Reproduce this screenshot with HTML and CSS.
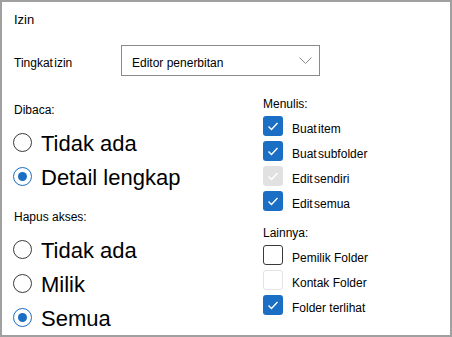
FILE: index.html
```html
<!DOCTYPE html>
<html lang="id">
<head>
<meta charset="utf-8">
<title>Izin</title>
<link rel="stylesheet" href="styles.css">
</head>
<body>
<div class="panel">
  <div class="title">Izin</div>
  <div class="level-row">
    <div class="level-label tight">Tingkat izin</div>
    <div class="select">
      <span class="select-text">Editor penerbitan</span>
      <svg class="chevron" width="13" height="7" viewBox="0 0 13 7"><path d="M0.5 0.5 L6.5 6.5 L12.5 0.5" fill="none" stroke="#8a8a8a" stroke-width="1"/></svg>
    </div>
  </div>
  <div class="columns">
    <div class="col-left">
      <div class="group-label">Dibaca:</div>
      <div class="radios">
        <div class="radio-row"><span class="radio"></span><span class="radio-text">Tidak ada</span></div>
        <div class="radio-row"><span class="radio on"></span><span class="radio-text">Detail lengkap</span></div>
      </div>
      <div class="group-label second">Hapus akses:</div>
      <div class="radios">
        <div class="radio-row"><span class="radio"></span><span class="radio-text">Tidak ada</span></div>
        <div class="radio-row"><span class="radio"></span><span class="radio-text">Milik</span></div>
        <div class="radio-row"><span class="radio on"></span><span class="radio-text">Semua</span></div>
      </div>
    </div>
    <div class="col-right">
      <div class="group-label">Menulis:</div>
      <div class="checks">
        <div class="check-row"><span class="box checked"><svg viewBox="0 0 20 20"><path d="M5.5 10.5 L8.5 13.5 L14.5 7" fill="none" stroke="#fff" stroke-width="1.4"/></svg></span><span class="check-text tight">Buat item</span></div>
        <div class="check-row"><span class="box checked"><svg viewBox="0 0 20 20"><path d="M5.5 10.5 L8.5 13.5 L14.5 7" fill="none" stroke="#fff" stroke-width="1.4"/></svg></span><span class="check-text tight">Buat subfolder</span></div>
        <div class="check-row"><span class="box checked-disabled"><svg viewBox="0 0 20 20"><path d="M5.5 10.5 L8.5 13.5 L14.5 7" fill="none" stroke="#fff" stroke-width="1.4"/></svg></span><span class="check-text tight">Edit sendiri</span></div>
        <div class="check-row"><span class="box checked"><svg viewBox="0 0 20 20"><path d="M5.5 10.5 L8.5 13.5 L14.5 7" fill="none" stroke="#fff" stroke-width="1.4"/></svg></span><span class="check-text tight">Edit semua</span></div>
      </div>
      <div class="group-label second-right">Lainnya:</div>
      <div class="checks">
        <div class="check-row"><span class="box empty"></span><span class="check-text">Pemilik Folder</span></div>
        <div class="check-row"><span class="box empty-disabled"></span><span class="check-text">Kontak Folder</span></div>
        <div class="check-row"><span class="box checked"><svg viewBox="0 0 20 20"><path d="M5.5 10.5 L8.5 13.5 L14.5 7" fill="none" stroke="#fff" stroke-width="1.4"/></svg></span><span class="check-text">Folder terlihat</span></div>
      </div>
    </div>
  </div>
</div>
</body>
</html>
```

FILE: styles.css
```css
html, body {
  margin: 0;
  padding: 0;
  background: #ffffff;
}

body {
  font-family: "Liberation Sans", Arial, sans-serif;
  color: #000;
}

.panel {
  width: 452px;
  height: 337px;
  box-sizing: border-box;
  border: 2px solid #a0a0a0;
  padding: 10px 12px 0 12px;
  overflow: hidden;
}

.title {
  font-size: 13px;
  line-height: 16px;
}

.tight {
  word-spacing: -2px;
}

.level-row {
  display: flex;
  margin-top: 17px;
  height: 31px;
}

.level-label {
  width: 107px;
  font-size: 12px;
  line-height: 25px;
  padding-top: 6px;
}

.select {
  width: 199px;
  height: 31px;
  box-sizing: border-box;
  border: 1px solid #8a8a8a;
  display: flex;
  align-items: flex-start;
  padding-left: 10px;
}

.select-text {
  font-size: 12px;
  line-height: 25px;
  padding-top: 5px;
}

.chevron {
  margin-left: auto;
  margin-right: 7px;
  margin-top: 11px;
}

.columns {
  display: grid;
  grid-template-columns: 249px 1fr;
}

.col-left {
  padding-top: 26px;
  display: flex;
  flex-direction: column;
}

.col-right {
  padding-top: 20px;
  display: flex;
  flex-direction: column;
}

.group-label {
  font-size: 12px;
  line-height: 16px;
}

.group-label.second {
  margin-top: 16px;
}

.group-label.second-right {
  margin-top: 14px;
}

.radios {
  display: flex;
  flex-direction: column;
  margin-top: 7px;
}

.radio-row {
  display: flex;
  align-items: center;
  height: 34px;
}

.radio {
  width: 19px;
  height: 19px;
  box-sizing: border-box;
  border: 1px solid #3a3a3a;
  border-radius: 50%;
  margin-left: -1px;
  display: flex;
  align-items: center;
  justify-content: center;
  flex: none;
}

.radio.on {
  border-color: #1a6ec4;
}

.radio.on::after {
  content: "";
  width: 9px;
  height: 9px;
  border-radius: 50%;
  background: #1a6ec4;
}

.radio-text {
  font-size: 22px;
  line-height: 31px;
  padding-top: 3px;
  margin-left: 9px;
  height: 34px;
  box-sizing: border-box;
}

.checks {
  display: flex;
  flex-direction: column;
  gap: 5px;
  margin-top: 4px;
}

.check-row {
  display: flex;
  align-items: flex-start;
  height: 20px;
}

.box {
  width: 20px;
  height: 20px;
  box-sizing: border-box;
  border-radius: 3px;
  flex: none;
  display: block;
}

.box svg {
  display: block;
  width: 20px;
  height: 20px;
}

.box.checked {
  background: #1a6ec4;
}

.box.checked-disabled {
  background: #e1e1e1;
}

.box.empty {
  border: 1px solid #3a3a3a;
}

.box.empty-disabled {
  border: 1px solid #e3e3e3;
}

.check-text {
  font-size: 12px;
  line-height: 20px;
  padding-top: 3px;
  margin-left: 9px;
}
```
